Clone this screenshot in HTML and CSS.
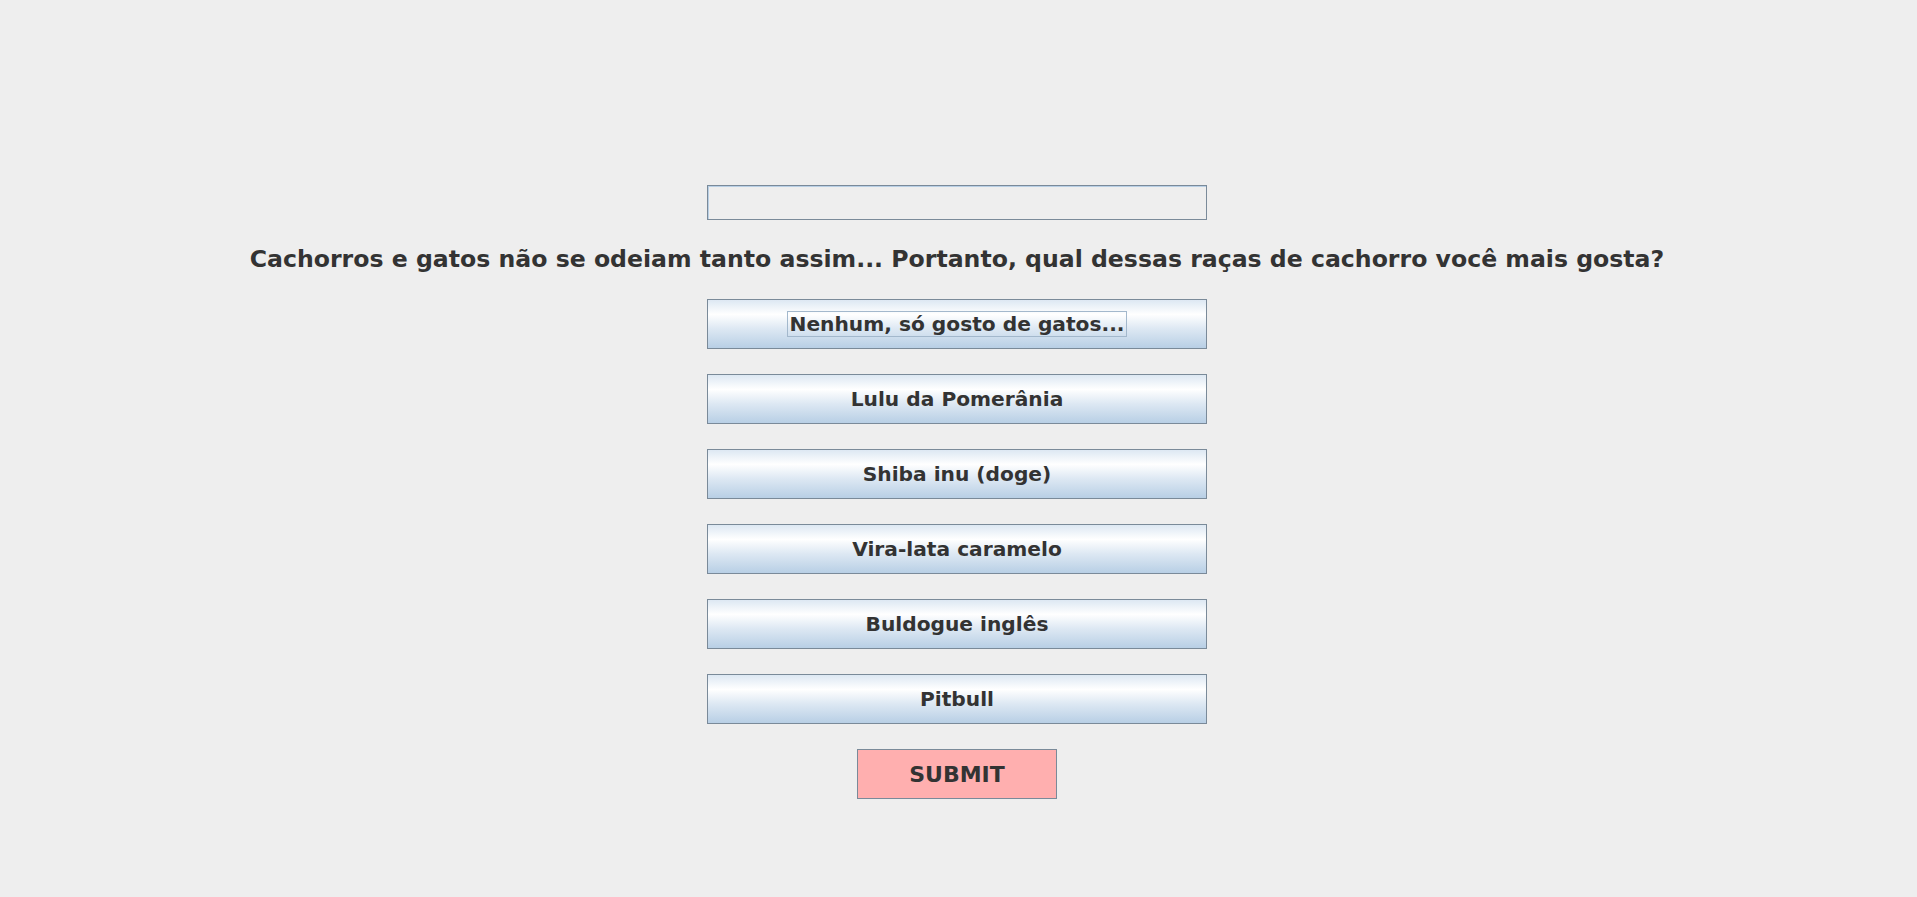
FILE: index.html
```html
<!DOCTYPE html>
<html lang="pt">
<head>
<meta charset="utf-8">
<title>Quiz</title>
<link rel="stylesheet" href="styles.css">
</head>
<body>
<main class="quiz">
  <div class="field"></div>
  <div class="question">Cachorros e gatos não se odeiam tanto assim... Portanto, qual dessas raças de cachorro você mais gosta?</div>
  <button class="option"><span class="focus">Nenhum, só gosto de gatos...</span></button>
  <button class="option"><span class="txt">Lulu da Pomerânia</span></button>
  <button class="option"><span class="txt">Shiba inu (doge)</span></button>
  <button class="option"><span class="txt">Vira-lata caramelo</span></button>
  <button class="option"><span class="txt">Buldogue inglês</span></button>
  <button class="option"><span class="txt">Pitbull</span></button>
  <button class="submit">SUBMIT</button>
</main>
</body>
</html>
```

FILE: styles.css
```css
html, body {
  margin: 0;
  padding: 0;
  background: #eeeeee;
}
body {
  width: 1917px;
  height: 897px;
  overflow: hidden;
  font-family: "DejaVu Sans", sans-serif;
  color: #333333;
}
.quiz {
  display: flex;
  flex-direction: column;
  align-items: center;
  padding-top: 185px;
  padding-right: 3px;
  gap: 25px;
}
.field {
  box-sizing: border-box;
  width: 500px;
  height: 35px;
  border: 1px solid #7a8a99;
  box-shadow: inset 1px 1px 0 #b8cfe5;
  background: #eeeeee;
}
.question {
  height: 29px;
  line-height: 29px;
  font-size: 23.6px;
  font-weight: bold;
  white-space: nowrap;
}
.option, .submit {
  box-sizing: border-box;
  height: 50px;
  border: 1px solid #7a8a99;
  font-family: "DejaVu Sans", sans-serif;
  font-weight: bold;
  color: #333333;
  padding: 0;
  margin: 0;
  display: flex;
  align-items: center;
  justify-content: center;
}
.option {
  width: 500px;
  font-size: 20.2px;
  background: linear-gradient(to bottom, #dde8f3 0%, #ffffff 30%, #dde8f3 60%, #b8cfe5 100%);
}
.focus {
  border: 1px solid #a3b8cc;
  padding: 0 1px;
  line-height: 24px;
}
.txt {
  line-height: 24px;
}
.submit {
  width: 200px;
  font-size: 22px;
  background: #ffafaf;
}
```
